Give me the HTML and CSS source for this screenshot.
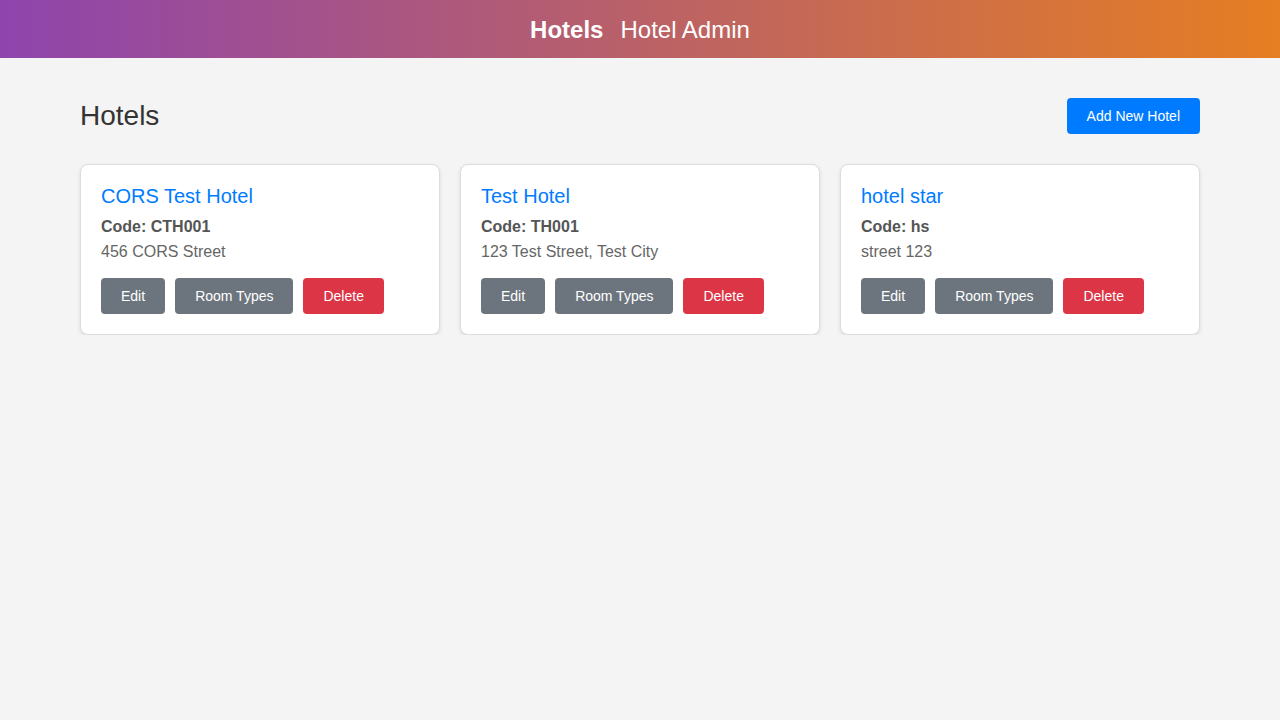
FILE: index.html
```html
<!DOCTYPE html>
<html lang="en">
<head>
<meta charset="utf-8">
<title>Hotel Admin</title>
<link rel="stylesheet" href="styles.css">
</head>
<body>
<header class="topbar">
  <span class="brand">Hotels</span>
  <span class="app-name">Hotel Admin</span>
</header>
<main class="container">
  <div class="page-head">
    <h1 class="page-title">Hotels</h1>
    <button class="btn btn-primary">Add New Hotel</button>
  </div>
  <div class="card-grid">
    <div class="card">
      <h3 class="card-title">CORS Test Hotel</h3>
      <p class="code">Code: CTH001</p>
      <p class="address">456 CORS Street</p>
      <div class="actions">
        <button class="btn btn-secondary">Edit</button>
        <button class="btn btn-secondary">Room Types</button>
        <button class="btn btn-danger">Delete</button>
      </div>
    </div>
    <div class="card">
      <h3 class="card-title">Test Hotel</h3>
      <p class="code">Code: TH001</p>
      <p class="address">123 Test Street, Test City</p>
      <div class="actions">
        <button class="btn btn-secondary">Edit</button>
        <button class="btn btn-secondary">Room Types</button>
        <button class="btn btn-danger">Delete</button>
      </div>
    </div>
    <div class="card">
      <h3 class="card-title">hotel star</h3>
      <p class="code">Code: hs</p>
      <p class="address">street 123</p>
      <div class="actions">
        <button class="btn btn-secondary">Edit</button>
        <button class="btn btn-secondary">Room Types</button>
        <button class="btn btn-danger">Delete</button>
      </div>
    </div>
  </div>
</main>
</body>
</html>
```
FILE: styles.css
```css
* { box-sizing: border-box; }
html, body {
  margin: 0;
  padding: 0;
}
body {
  background: #f4f4f4;
  font-family: "Liberation Sans", Arial, sans-serif;
  color: #333;
}
.topbar {
  height: 58px;
  padding-top: 2px;
  display: flex;
  align-items: center;
  justify-content: center;
  gap: 17px;
  background: linear-gradient(to right, #8e44ad, #e67e22);
  color: #fff;
  font-size: 24px;
  line-height: 28px;
}
.brand { font-weight: bold; }
.container {
  width: 1120px;
  margin: 0 auto;
  padding-top: 40px;
}
.page-head {
  display: flex;
  justify-content: space-between;
  align-items: center;
  height: 36px;
  margin-bottom: 30px;
}
.page-title {
  margin: 0;
  font-size: 28px;
  font-weight: normal;
  color: #333;
  line-height: 32px;
}
.btn {
  font-family: "Liberation Sans", Arial, sans-serif;
  font-size: 14px;
  line-height: 16px;
  height: 36px;
  padding: 10px 20px;
  border: none;
  border-radius: 4px;
  color: #fff;
  cursor: pointer;
}
.btn-primary { background: #007bff; }
.btn-secondary { background: #6c757d; }
.btn-danger { background: #dc3545; }
.card-grid {
  display: grid;
  grid-template-columns: repeat(3, 1fr);
  gap: 20px;
}
.card {
  background: #fff;
  border: 1px solid #ddd;
  border-radius: 8px;
  padding: 20px;
  box-shadow: 0 2px 4px rgba(0,0,0,0.1);
}
.card-title {
  margin: 0 0 11px;
  font-size: 20px;
  line-height: 22px;
  font-weight: normal;
  color: #007bff;
}
.code {
  margin: 0 0 7px;
  font-size: 16px;
  line-height: 18px;
  font-weight: bold;
  color: #555;
}
.address {
  margin: 0 0 17px;
  font-size: 16px;
  line-height: 18px;
  color: #666;
}
.actions {
  display: flex;
  gap: 10px;
}
```
